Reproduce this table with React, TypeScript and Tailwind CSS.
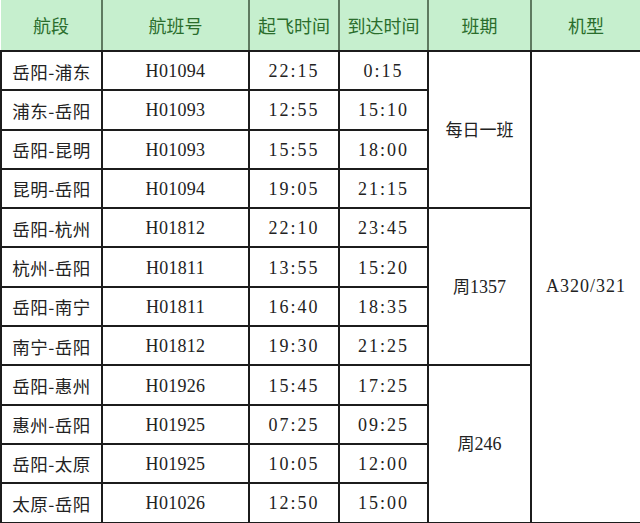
type Flight = {
  route: string;
  code: string;
  dep: string;
  arr: string;
};

const flights: Flight[] = [
  { route: "岳阳-浦东", code: "H01094", dep: "22:15", arr: "0:15" },
  { route: "浦东-岳阳", code: "H01093", dep: "12:55", arr: "15:10" },
  { route: "岳阳-昆明", code: "H01093", dep: "15:55", arr: "18:00" },
  { route: "昆明-岳阳", code: "H01094", dep: "19:05", arr: "21:15" },
  { route: "岳阳-杭州", code: "H01812", dep: "22:10", arr: "23:45" },
  { route: "杭州-岳阳", code: "H01811", dep: "13:55", arr: "15:20" },
  { route: "岳阳-南宁", code: "H01811", dep: "16:40", arr: "18:35" },
  { route: "南宁-岳阳", code: "H01812", dep: "19:30", arr: "21:25" },
  { route: "岳阳-惠州", code: "H01926", dep: "15:45", arr: "17:25" },
  { route: "惠州-岳阳", code: "H01925", dep: "07:25", arr: "09:25" },
  { route: "岳阳-太原", code: "H01925", dep: "10:05", arr: "12:00" },
  { route: "太原-岳阳", code: "H01026", dep: "12:50", arr: "15:00" },
];

const schedules: Record<number, string> = { 0: "每日一班", 4: "周1357", 8: "周246" };

const headers = ["航段", "航班号", "起飞时间", "到达时间", "班期", "机型"];

const cjk = "font-['Noto_Sans_CJK_SC',sans-serif]";
const serif = "font-['Liberation_Serif','Noto_Sans_CJK_SC',serif]";
const cell = "border-2 border-[#1c1c1c] text-center text-[#222] p-0";

export default function App() {
  return (
    <div className="w-[640px] h-[523px] overflow-hidden bg-white">
      <table className="w-[640px] border-collapse table-fixed">
        <colgroup>
          <col className="w-[101px]" />
          <col className="w-[147px]" />
          <col className="w-[90px]" />
          <col className="w-[89px]" />
          <col className="w-[103px]" />
          <col className="w-[110px]" />
        </colgroup>
        <thead>
          <tr className="h-[51px] bg-[#c6efce]">
            {headers.map((h, i) => (
              <th
                key={h}
                className={`${cjk} p-0 text-[18px] font-normal text-[#2a6d2c] border-b-2 border-b-[#1c1c1c] border-t-0 ${
                  i === 0 ? "border-l-0" : "border-l-2 border-l-[#5e7a60]"
                } ${i === 5 ? "border-r-2 border-r-[#5e7a60]" : ""}`}
              >
                {h}
              </th>
            ))}
          </tr>
        </thead>
        <tbody>
          {flights.map((f, i) => (
            <tr key={i} className="h-[39.3px]">
              <td className={`${cell} ${cjk} text-[17.5px] tracking-[0.5px] pt-[2px]`}>{f.route}</td>
              <td className={`${cell} ${serif} text-[18px] tracking-[0.3px] pt-[2px]`}>{f.code}</td>
              <td className={`${cell} ${serif} text-[18px] tracking-[2px] pt-[2px]`}>{f.dep}</td>
              <td className={`${cell} ${serif} text-[18px] tracking-[2px] pt-[2px]`}>{f.arr}</td>
              {schedules[i] !== undefined && (
                <td rowSpan={4} className={`${cell} ${cjk} text-[17px]`}>
                  {schedules[i].replace(/\d+/, "")}
                  <span className={`${serif} text-[18px]`}>{schedules[i].match(/\d+/)?.[0]}</span>
                </td>
              )}
              {i === 0 && (
                <td rowSpan={12} className={`${cell} ${serif} text-[18px] tracking-[1px]`}>
                  A320/321
                </td>
              )}
            </tr>
          ))}
        </tbody>
      </table>
    </div>
  );
}
